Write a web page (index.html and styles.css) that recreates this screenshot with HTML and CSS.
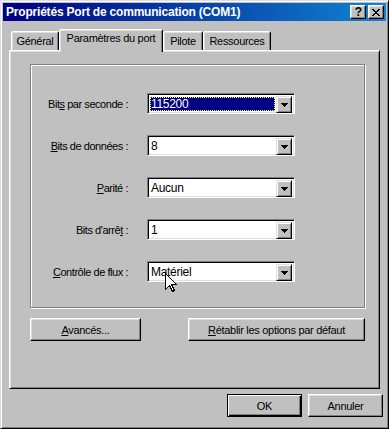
FILE: index.html
```html
<!DOCTYPE html>
<html lang="fr">
<head>
<meta charset="utf-8">
<title>Propriétés Port de communication (COM1)</title>
<link rel="stylesheet" href="styles.css">
</head>
<body>
<div class="window">
  <div class="titlebar">
    <span class="title">Propriétés Port de communication (COM1)</span>
    <div class="tb-buttons">
      <span class="tb-btn help">?</span>
      <span class="tb-btn close"><svg width="8" height="7" viewBox="0 0 8 7" shape-rendering="crispEdges"><path d="M0 0h2v1h-2z M6 0h2v1h-2z M1 1h2v1h-2z M5 1h2v1h-2z M2 2h4v1h-4z M3 3h2v1h-2z M2 4h4v1h-4z M1 5h2v1h-2z M5 5h2v1h-2z M0 6h2v1h-2z M6 6h2v1h-2z" fill="#000"/></svg></span>
    </div>
  </div>
  <div class="tabs">
    <div class="tab tab-general">Général</div>
    <div class="tab active tab-port">Paramètres du port</div>
    <div class="tab tab-pilote">Pilote</div>
    <div class="tab tab-res">Ressources</div>
  </div>
  <div class="panel">
    <div class="group">
      <div class="fields">
        <label class="lbl">Bit<u>s</u> par seconde :</label>
        <div class="combo focused"><span class="val"><span class="sel">115200</span></span><span class="drop"><svg width="7" height="4" viewBox="0 0 7 4" shape-rendering="crispEdges"><path d="M0 0h7v1h-7z M1 1h5v1h-5z M2 2h3v1h-3z M3 3h1v1h-1z" fill="#000"/></svg></span></div>
        <label class="lbl"><u>B</u>its de données :</label>
        <div class="combo"><span class="val">8</span><span class="drop"><svg width="7" height="4" viewBox="0 0 7 4" shape-rendering="crispEdges"><path d="M0 0h7v1h-7z M1 1h5v1h-5z M2 2h3v1h-3z M3 3h1v1h-1z" fill="#000"/></svg></span></div>
        <label class="lbl"><u>P</u>arité :</label>
        <div class="combo"><span class="val">Aucun</span><span class="drop"><svg width="7" height="4" viewBox="0 0 7 4" shape-rendering="crispEdges"><path d="M0 0h7v1h-7z M1 1h5v1h-5z M2 2h3v1h-3z M3 3h1v1h-1z" fill="#000"/></svg></span></div>
        <label class="lbl">Bits d'arrê<u>t</u> :</label>
        <div class="combo"><span class="val">1</span><span class="drop"><svg width="7" height="4" viewBox="0 0 7 4" shape-rendering="crispEdges"><path d="M0 0h7v1h-7z M1 1h5v1h-5z M2 2h3v1h-3z M3 3h1v1h-1z" fill="#000"/></svg></span></div>
        <label class="lbl"><u>C</u>ontrôle de flux :</label>
        <div class="combo"><span class="val">Matériel</span><span class="drop"><svg width="7" height="4" viewBox="0 0 7 4" shape-rendering="crispEdges"><path d="M0 0h7v1h-7z M1 1h5v1h-5z M2 2h3v1h-3z M3 3h1v1h-1z" fill="#000"/></svg></span></div>
      </div>
    </div>
    <div class="actions">
      <button class="btn btn-adv"><u>A</u>vancés...</button>
      <button class="btn btn-reset"><u>R</u>établir les options par défaut</button>
    </div>
  </div>
  <div class="footer">
    <button class="btn btn-dlg default">OK</button>
    <button class="btn btn-dlg">Annuler</button>
  </div>
  <svg class="cursor" width="12" height="20" viewBox="0 0 12 20" shape-rendering="crispEdges"><path d="M0.5 0.5 V16.5 L4.5 12.5 L7.5 18.5 L9.5 17.5 L6.5 11.5 H11.5 Z" fill="#fff" stroke="#000" stroke-width="1"/></svg>
</div>
</body>
</html>
```

FILE: styles.css
```css
* { box-sizing: border-box; }
html, body { margin: 0; padding: 0; background: #c0c0c0; }
body {
  font-family: "Liberation Sans", Arial, sans-serif;
  font-size: 11px;
  color: #000;
}
.window {
  position: relative;
  width: 389px;
  height: 429px;
  background: #c0c0c0;
  border: 1px solid;
  border-color: #dfdfdf #000 #000 #dfdfdf;
  box-shadow: inset 1px 1px #fff, inset -1px -1px #808080;
  padding: 2px;
}
.titlebar {
  height: 18px;
  display: flex;
  align-items: center;
  justify-content: space-between;
  padding: 0 2px 0 3px;
  background: linear-gradient(to right, #000080, #1084d0);
}
.title {
  color: #fff;
  font-weight: bold;
  font-size: 12px;
  letter-spacing: -0.2px;
}
.tb-buttons { display: flex; gap: 2px; }
.tb-btn {
  width: 16px;
  height: 14px;
  display: flex;
  align-items: center;
  justify-content: center;
  background: #c0c0c0;
  border: 1px solid;
  border-color: #fff #000 #000 #fff;
  box-shadow: inset -1px -1px #808080, inset 1px 1px #dfdfdf;
}
.tb-btn.help { font-weight: bold; font-size: 12px; line-height: 12px; padding-left: 1px; }
.tabs {
  display: flex;
  align-items: flex-end;
  height: 23px;
  margin: 8px 0 -2px 8px;
  position: relative;
  z-index: 1;
}
.tab {
  height: 19px;
  margin-bottom: 2px;
  background: #c0c0c0;
  border: 1px solid;
  border-bottom: none;
  border-color: #fff #000 transparent #fff;
  border-radius: 2px 2px 0 0;
  box-shadow: inset 1px 1px #dfdfdf, inset -1px 0 #808080;
  text-align: center;
  padding-top: 3px;
  white-space: nowrap;
  letter-spacing: -0.3px;
}
.tab.active {
  height: 23px;
  margin-bottom: 0;
  padding-top: 2px;
}
.tab-general { width: 48px; }
.tab-port { width: 104px; }
.tab-pilote { width: 40px; }
.tab-res { width: 68px; }
.panel {
  width: 371px;
  height: 339px;
  margin-left: 6px;
  border: 1px solid;
  border-color: #fff #000 #000 #fff;
  box-shadow: inset 1px 1px #dfdfdf, inset -1px -1px #808080;
  padding: 13px 0 0 20px;
}
.group {
  width: 335px;
  height: 244px;
  border: 1px solid #808080;
  box-shadow: 1px 1px 0 #fff, inset 1px 1px 0 #fff;
  padding-top: 28px;
}
.fields {
  display: grid;
  grid-template-columns: 97px 148px;
  grid-auto-rows: 21px;
  column-gap: 19px;
  row-gap: 21px;
  align-items: center;
}
.lbl {
  text-align: right;
  white-space: nowrap;
  letter-spacing: -0.45px;
}
.combo {
  height: 21px;
  display: flex;
  background: #fff;
  border: 1px solid;
  border-color: #808080 #fff #fff #808080;
  box-shadow: inset 1px 1px #000, inset -1px -1px #dfdfdf;
  padding: 2px 2px 2px 2px;
}
.val {
  flex: 1;
  display: flex;
  align-items: center;
  padding-left: 1px;
  letter-spacing: -0.3px;
  font-size: 12px;
}
.combo.focused .val { padding: 1px 1px 0 0; }
.sel {
  flex: 1;
  align-self: stretch;
  display: flex;
  align-items: center;
  background: #000080;
  color: #fff;
  border: 1px dotted #ffff40;
  padding-left: 0;
}
.drop {
  width: 16px;
  height: 17px;
  display: flex;
  align-items: center;
  justify-content: center;
  background: #c0c0c0;
  border: 1px solid;
  border-color: #dfdfdf #000 #000 #dfdfdf;
  box-shadow: inset 1px 1px #fff, inset -1px -1px #808080;
}
.actions {
  width: 335px;
  margin-top: 10px;
  display: flex;
  justify-content: space-between;
}
.btn {
  height: 23px;
  font-family: "Liberation Sans", Arial, sans-serif;
  font-size: 11px;
  letter-spacing: -0.3px;
  color: #000;
  background: #c0c0c0;
  border: 1px solid;
  border-color: #fff #000 #000 #fff;
  box-shadow: inset -1px -1px #808080, inset 1px 1px #dfdfdf;
  padding: 0;
  margin: 0;
}
.btn-adv { width: 111px; }
.btn-reset { width: 177px; }
.footer {
  display: flex;
  justify-content: flex-end;
  gap: 6px;
  margin: 5px 3px 0 0;
}
.btn-dlg { width: 75px; }
.btn.default {
  border-color: #000;
  box-shadow: inset 1px 1px #fff, inset -1px -1px #000, inset -2px -2px #808080;
}
.cursor {
  position: absolute;
  left: 164px;
  top: 272px;
}
```
